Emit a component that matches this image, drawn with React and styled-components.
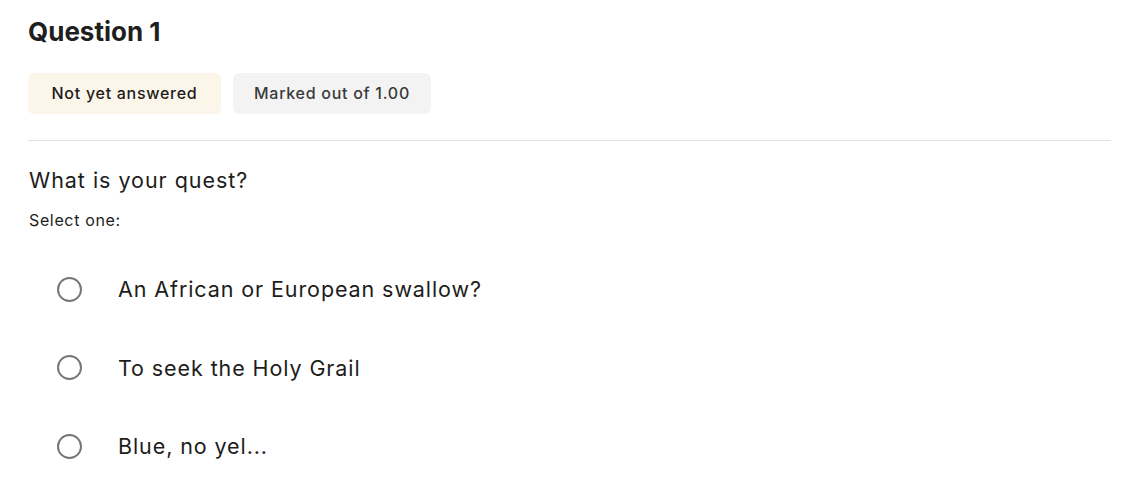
import styled, { createGlobalStyle } from 'styled-components'

const GlobalStyle = createGlobalStyle`
    body {
        margin: 0;
        background: #ffffff;
        font-family: Inter, "Open Sans", sans-serif;
        color: #1d1d1b;
    }
`

const StyledPage = styled.div`
    padding: 14px 28px 20px 28px;
`

const StyledTitle = styled.h2`
    margin: 0;
    font-size: 26px;
    font-weight: 700;
    line-height: 36px;
    color: #1f1f1f;
`

const StyledBadgeRow = styled.div`
    display: flex;
    gap: 12px;
    margin-top: 23px;
`

const StyledBadge = styled.span`
    display: inline-flex;
    align-items: center;
    justify-content: center;
    height: 41px;
    padding-bottom: 1px;
    box-sizing: border-box;
    width: ${props => (props.$tone === 'warn' ? '193px' : '198px')};
    border-radius: 6px;
    font-size: 16px;
    font-weight: 500;
    letter-spacing: 0.045em;
    background-color: ${props => (props.$tone === 'warn' ? '#fcf5ea' : '#f3f3f3')};
    color: ${props => (props.$tone === 'warn' ? '#1d1d1b' : '#3a3a3a')};
`

const StyledDivider = styled.hr`
    margin: 26px 0 0 0;
    border: 0;
    border-top: 1px solid #e2e2e2;
`

const StyledPrompt = styled.p`
    margin: 24px 0 0 1px;
    font-size: 21.5px;
    line-height: 30px;
    letter-spacing: 0.045em;
    color: #1d1d1b;
`

const StyledHint = styled.p`
    margin: 15px 0 0 1px;
    font-size: 16px;
    line-height: 20px;
    letter-spacing: 0.04em;
    color: #1d1d1b;
`

const StyledOptions = styled.ul`
    list-style: none;
    margin: 20px 0 0 0;
    padding: 0;
`

const StyledOption = styled.li`
    display: flex;
    align-items: center;
    height: 78.5px;
    padding-left: 29px;
    font-size: 21.5px;
    letter-spacing: 0.042em;
`

const StyledRadio = styled.span`
    flex: none;
    width: 21px;
    height: 21px;
    border: 2px solid #767676;
    border-radius: 50%;
    margin-right: 36px;
`

const options = [
    'An African or European swallow?',
    'To seek the Holy Grail',
    'Blue, no yel...',
]

const App = () => (
    <>
        <GlobalStyle />
        <StyledPage>
            <StyledTitle>Question 1</StyledTitle>
            <StyledBadgeRow>
                <StyledBadge $tone="warn">Not yet answered</StyledBadge>
                <StyledBadge>Marked out of 1.00</StyledBadge>
            </StyledBadgeRow>
            <StyledDivider />
            <StyledPrompt>What is your quest?</StyledPrompt>
            <StyledHint>Select one:</StyledHint>
            <StyledOptions>
                {options.map((option, index) => (
                    <StyledOption key={index}>
                        <StyledRadio />
                        {option}
                    </StyledOption>
                ))}
            </StyledOptions>
        </StyledPage>
    </>
)

export default App
